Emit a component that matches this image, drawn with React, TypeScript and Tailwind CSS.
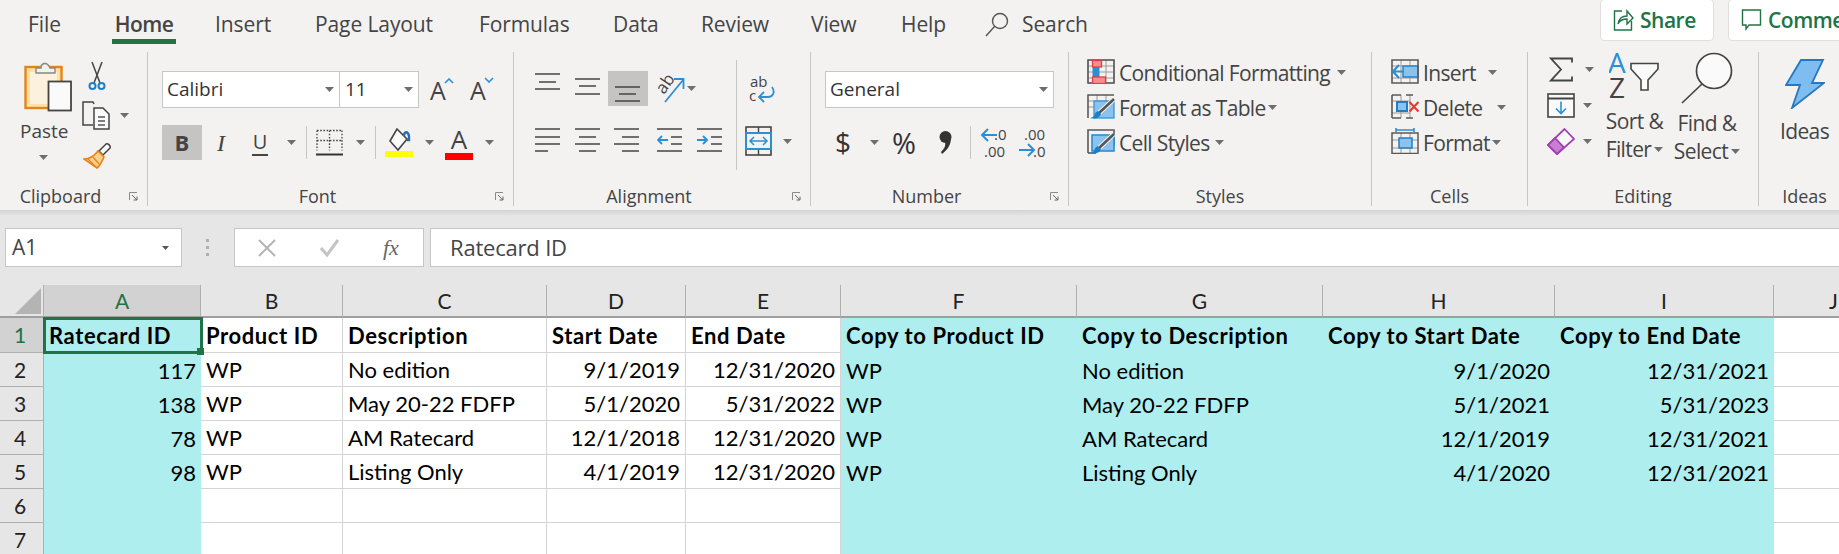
import React from "react";

const S = ({ w, h, className = "", children }: { w: number; h: number; className?: string; children?: React.ReactNode }) => (
  <svg width={w} height={h} viewBox={`0 0 ${w} ${h}`} fill="none" className={`block shrink-0 ${className}`}>
    {children}
  </svg>
);

const Caret = ({ className = "" }: { className?: string }) => (
  <S w={9} h={5} className={className}>
    <path d="M0 0h9L4.5 5z" fill="#6e6e6e" />
  </S>
);

const D = "#444444";
const BL = "#2b8fd6";
const G = "#5a5a5a";

const PasteIcon = ({ className = "" }: { className?: string }) => (
  <S w={48} h={52} className={className}>
    <rect x="1.5" y="7" width="36" height="41" fill="#fde2a6" stroke="#e5841b" strokeWidth="2.4" />
    <rect x="6" y="12" width="27" height="32" fill="#fbf1dc" />
    <path d="M12 13V8h5c0-5 6-7 9 0h5v5z" fill="#f3f2f1" stroke="#888" strokeWidth="1.4" />
    <rect x="24.5" y="21.5" width="22.5" height="29" fill="#fafafa" stroke="#444" strokeWidth="1.8" />
  </S>
);
const CutIcon = ({ className = "" }: { className?: string }) => (
  <S w={18} h={30} className={className}>
    <path d="M4 1l8 21M14 1L6 22" stroke="#444" strokeWidth="1.5" />
    <circle cx="4.5" cy="25" r="3" stroke="#1f7fc6" strokeWidth="2" />
    <circle cx="13.5" cy="25" r="3" stroke="#1f7fc6" strokeWidth="2" />
  </S>
);
const CopyIcon = () => (
  <S w={28} h={29}>
    <path d="M11 24H1V1h10l1 2" stroke="#444" strokeWidth="1.5" />
    <path d="M12 7h9l6 6v15H12z" fill="#fafafa" stroke="#444" strokeWidth="1.5" />
    <path d="M16 16h7M16 20h7M16 24h7" stroke="#555" strokeWidth="1.3" />
  </S>
);
const BrushIcon = ({ className = "" }: { className?: string }) => (
  <S w={28} h={27} className={className}>
    <path d="M16 9l4 4 7-7c1-2-2-5-4-4z" fill="#fafafa" stroke="#444" strokeWidth="1.5" />
    <path d="M1 17c6 0 11-4 14-8l6 6c-2 4-4 9-7 11z" fill="#fbd08c" stroke="#e5841b" strokeWidth="1.6" />
    <path d="M5 17l9 9M10 15l6 7" stroke="#e5841b" strokeWidth="1.2" />
  </S>
);
const BordersIcon = () => (
  <S w={27} h={28}>
    <path d="M1 1.5h25M1 1.5v20M26 1.5v20M13.5 1.5v20M1 11.5h25" stroke="#444" strokeWidth="1.3" strokeDasharray="1.6 1.6" />
    <path d="M0 25.5h27" stroke="#333" strokeWidth="2" />
  </S>
);
const FillIcon = () => (
  <S w={28} h={29}>
    <path d="M12 1l10 10-9 11L5 13z" fill="#fafafa" stroke="#444" strokeWidth="1.6" />
    <path d="M19 8c0-5 4-5 5 0v4h-2" stroke="#1f6fb8" strokeWidth="2.4" />
    <rect x="0" y="23" width="28" height="6.5" fill="#ffff00" />
  </S>
);
const Lines = ({ l }: { l: [number, number, number][] }) => (
  <S w={26} h={35}>
    {l.map(([a, b, y], i) => (
      <path key={i} d={`M${a} ${y}H${b}`} stroke={D} strokeWidth="1.5" />
    ))}
  </S>
);
const Arrow = ({ d }: { d: string }) => <path d={d} stroke={BL} strokeWidth="1.9" />;

const OrientIcon = () => (
  <S w={30} h={35}>
    <text x="0" y="0" transform="translate(9 24) rotate(-55)" fontSize="17" fill={D} fontFamily="Open Sans">ab</text>
    <path d="M10 31L28 9M19 8h9.5v10" stroke={BL} strokeWidth="1.8" />
  </S>
);
const WrapIcon = () => (
  <S w={28} h={30}>
    <text x="2" y="13" fontSize="15" fill={D} fontFamily="Open Sans">ab</text>
    <text x="1" y="27" fontSize="15" fill={D} fontFamily="Open Sans">c</text>
    <path d="M24 13c4 6 0 10-4 10h-8M16 18l-5 5 5 5" stroke={BL} strokeWidth="1.8" />
  </S>
);
const MergeIcon = () => (
  <S w={27} h={30}>
    <rect x="1" y="1" width="25" height="28" stroke="#444" strokeWidth="1.6" />
    <path d="M13.5 1v6M13.5 23v6" stroke="#444" strokeWidth="1.4" />
    <rect x="1" y="7" width="25" height="16" fill="#f3f2f1" stroke={BL} strokeWidth="2" />
    <path d="M5 15h17M9 11l-4 4 4 4M18 11l4 4-4 4" stroke={BL} strokeWidth="1.5" />
  </S>
);
const CommaIcon = () => (
  <S w={14} h={26}>
    <circle cx="7.5" cy="7" r="6" fill="#333" />
    <path d="M13 8c0 8-5 13-9 16l-1-2c3-3 5-6 4-10z" fill="#333" />
  </S>
);
const DecIcon = ({ inc }: { inc?: boolean }) => (
  <S w={28} h={34}>
    {inc ? (
      <>
        <text x="6" y="14" fontSize="15" fill={D} fontFamily="Open Sans">.00</text>
        <text x="15" y="31" fontSize="15" fill={D} fontFamily="Open Sans">.0</text>
        <path d="M1 24h15M10 18l6 6-6 6" stroke={BL} strokeWidth="2" />
      </>
    ) : (
      <>
        <text x="14" y="14" fontSize="15" fill={D} fontFamily="Open Sans">.0</text>
        <text x="4" y="31" fontSize="15" fill={D} fontFamily="Open Sans">.00</text>
        <path d="M17 9H2M8 3L2 9l6 6" stroke={BL} strokeWidth="2" />
      </>
    )}
  </S>
);
const GridLines = () => (
  <path d="M1 1h26v23H1zM10 1v23M19 1v23M1 7h26M1 13h26M1 19h26" stroke="#9a9a9a" strokeWidth="1" />
);
const Frame = () => <path d="M1 1h26v23H1z" stroke={G} strokeWidth="1.6" />;
const CondIcon = () => (
  <S w={28} h={25}>
    <GridLines />
    <Frame />
    <rect x="5.5" y="8" width="7" height="10" fill={BL} />
    <rect x="5.5" y="1.5" width="9" height="6.5" fill="#f58f8f" stroke="#e63c3c" strokeWidth="1.3" />
    <rect x="5.5" y="18" width="13" height="6.5" fill="#f58f8f" stroke="#e63c3c" strokeWidth="1.3" />
  </S>
);
const Brush = () => (
  <>
    <path d="M27 5L12 19" stroke="#f3f2f1" strokeWidth="4.5" />
    <path d="M27 5L12 19" stroke="#555" strokeWidth="2.6" />
    <path d="M11 17c-3 1-3 3-4 5-1 1-3 2-4 2 4 1 9 1 11-4z" fill="#1f7fc6" />
  </>
);
const TableIcon = () => (
  <S w={28} h={25}>
    <path d="M1 7h26M1 13h26M10 1v23M19 1v23" stroke="#9a9a9a" />
    <rect x="7" y="7" width="20" height="17" fill="#8cc3ee" stroke={BL} strokeWidth="1.2" />
    <path d="M1 24V1h26" stroke={G} strokeWidth="1.6" />
    <Brush />
  </S>
);
const CellStyleIcon = () => (
  <S w={28} h={25}>
    <path d="M1 24V1h26v16" stroke={G} strokeWidth="1.6" />
    <path d="M1 24h8" stroke={G} strokeWidth="1.6" />
    <rect x="5" y="6" width="22" height="16" fill="#8cc3ee" stroke={BL} strokeWidth="1.6" />
    <Brush />
  </S>
);
const InsertIcon = () => (
  <S w={28} h={25}>
    <path d="M10 1v23M19 1v23M1 7h26M1 19h26" stroke="#9a9a9a" />
    <rect x="12" y="7" width="15" height="11" fill="#8cc3ee" stroke="#1f7fc6" strokeWidth="1.4" />
    <Frame />
    <path d="M13 12.5H2M8 6l-6 6.5L8 19" stroke={BL} strokeWidth="2.2" />
  </S>
);
const DeleteIcon = () => (
  <S w={28} h={25}>
    <path d="M10 1v23M19 1v23M1 7h18M1 19h18" stroke="#9a9a9a" />
    <path d="M1 1h9M15 1h7M1 24h9M15 24h7M1 1v23" stroke={G} strokeWidth="1.6" />
    <rect x="6" y="8" width="10" height="9" fill="#8cc3ee" stroke="#1f7fc6" strokeWidth="2" />
    <path d="M18.5 8l9 9.5M27.5 8l-9 9.5" stroke="#e53935" strokeWidth="2.2" />
  </S>
);
const FormatIcon = () => (
  <S w={28} h={26}>
    <path d="M5 2h18M5 0v4M23 0v4" stroke={BL} strokeWidth="1.6" />
    <path d="M10 5v21M19 5v21M1 12h26M1 20h26" stroke="#9a9a9a" />
    <path d="M1 5h26v20.5H1z" stroke={G} strokeWidth="1.5" />
    <rect x="8" y="10" width="13" height="10" fill="#8cc3ee" stroke="#1f7fc6" strokeWidth="1.5" />
  </S>
);
const SigmaIcon = () => (
  <S w={24} h={25}>
    <path d="M23 5.5V1.5H2L12 12.5 2 23.5h21v-4" stroke="#444" strokeWidth="1.8" />
  </S>
);
const FillDown = () => (
  <S w={28} h={25}>
    <rect x="1" y="1" width="26" height="23" fill="#fafafa" stroke="#444" strokeWidth="1.6" />
    <path d="M1 5.5h26" stroke="#444" strokeWidth="2" />
    <path d="M14 8.5v12M9 15.5l5 5 5-5" stroke={BL} strokeWidth="1.6" />
  </S>
);
const ClearIcon = () => (
  <S w={28} h={27}>
    <path d="M17.5 1L27 11 10 26 1 17z" fill="#fafafa" stroke="#a03fb0" strokeWidth="1.8" />
    <path d="M8 10L17 19.5 10 26 1 17z" fill="#c77fd1" stroke="#a03fb0" strokeWidth="1.8" />
  </S>
);
const SortIcon = () => (
  <S w={51} h={47}>
    <text x="-1" y="21" fontSize="28" fill={BL} fontFamily="Open Sans">A</text>
    <text x="0" y="46" fontSize="28" fill={D} fontFamily="Open Sans">Z</text>
    <path d="M22 11.5h27V17L39 28v10h-7V28L22 17z" fill="#fafafa" stroke="#444" strokeWidth="1.6" />
  </S>
);
const FindIcon = () => (
  <S w={53} h={52}>
    <circle cx="33" cy="19" r="17.5" fill="#fafafa" stroke="#444" strokeWidth="1.7" />
    <path d="M21 32L1 51" stroke="#444" strokeWidth="1.7" />
  </S>
);
const BoltIcon = () => (
  <S w={40} h={50}>
    <path d="M16 1h22L27 24h12L7 49l8-23H1z" fill="#7fbdf0" stroke="#2478c2" strokeWidth="1.8" />
  </S>
);

const Group = ({
  w,
  label,
  launcher,
  children,
}: {
  w: string;
  label: string;
  launcher?: boolean;
  children: React.ReactNode;
}) => (
  <div className={`h-[154px] shrink-0 border-r border-[#c8c6c4] flex flex-col ${w}`}>
    <div className="h-[134px]">{children}</div>
    <div className="h-[20px] flex items-center">
      <div className="flex-1 text-center text-[18px] leading-[20px] text-[#444] whitespace-nowrap">{label}</div>
      {launcher && (
        <div className="w-[26px] flex justify-start pl-[8px]">
          <S w={9} h={9}>
            <path d="M.5 8V.5H8" stroke="#8a8a8a" />
            <path d="M3 3l5 5M8 4.5V8H4.5" stroke="#666" />
          </S>
        </div>
      )}
    </div>
  </div>
);

const StyleRow = ({ icon, text, w }: { icon: React.ReactNode; text: string; w: string }) => (
  <div className="h-[35px] flex items-center">
    <div className="mb-[3px]">{icon}</div>
    <div className={`ml-[4px] ${w} text-[21px] leading-[24px] tracking-[-0.65px] text-[#444] whitespace-nowrap`}>{text}</div>
    <Caret />
  </div>
);

type Cell = { t: string; r?: boolean };
const rows: Cell[][] = [
  [{ t: "Ratecard ID" }, { t: "Product ID" }, { t: "Description" }, { t: "Start Date" }, { t: "End Date" }, { t: "Copy to Product ID" }, { t: "Copy to Description" }, { t: "Copy to Start Date" }, { t: "Copy to End Date" }, { t: "" }],
  [{ t: "117", r: true }, { t: "WP" }, { t: "No edition" }, { t: "9/1/2019", r: true }, { t: "12/31/2020", r: true }, { t: "WP" }, { t: "No edition" }, { t: "9/1/2020", r: true }, { t: "12/31/2021", r: true }, { t: "" }],
  [{ t: "138", r: true }, { t: "WP" }, { t: "May 20-22 FDFP" }, { t: "5/1/2020", r: true }, { t: "5/31/2022", r: true }, { t: "WP" }, { t: "May 20-22 FDFP" }, { t: "5/1/2021", r: true }, { t: "5/31/2023", r: true }, { t: "" }],
  [{ t: "78", r: true }, { t: "WP" }, { t: "AM Ratecard" }, { t: "12/1/2018", r: true }, { t: "12/31/2020", r: true }, { t: "WP" }, { t: "AM Ratecard" }, { t: "12/1/2019", r: true }, { t: "12/31/2021", r: true }, { t: "" }],
  [{ t: "98", r: true }, { t: "WP" }, { t: "Listing Only" }, { t: "4/1/2019", r: true }, { t: "12/31/2020", r: true }, { t: "WP" }, { t: "Listing Only" }, { t: "4/1/2020", r: true }, { t: "12/31/2021", r: true }, { t: "" }],
  Array.from({ length: 10 }, () => ({ t: "" })),
  Array.from({ length: 10 }, () => ({ t: "" })),
];
const teal = [0, 5, 6, 7, 8];
const cols = ["A", "B", "C", "D", "E", "F", "G", "H", "I", "J"];

export default function App() {
  return (
    <div className="w-[1839px] h-[554px] overflow-hidden bg-[#e6e6e6] font-['Open_Sans',sans-serif]">
      {/* Ribbon */}
      <div className="h-[210px] bg-[#f3f2f1] overflow-hidden">
        <div className="h-[52px] flex *:shrink-0 text-[21px] leading-[26px] tracking-[-0.1px] text-[#444] whitespace-nowrap">
          <div className="ml-[28px] w-[34px] mt-[11px]">File</div>
          <div className="ml-[50px] w-[64px] h-[44px] pt-[11px] border-b-[5px] border-[#217346] font-semibold text-center tracking-[-0.5px]">Home</div>
          <div className="ml-[39px] w-[57px] mt-[11px]">Insert</div>
          <div className="ml-[43px] w-[123px] mt-[11px]">Page Layout</div>
          <div className="ml-[41px] w-[93px] mt-[11px]">Formulas</div>
          <div className="ml-[41px] w-[47px] mt-[11px]">Data</div>
          <div className="ml-[41px] w-[70px] mt-[11px]">Review</div>
          <div className="ml-[40px] w-[48px] mt-[11px]">View</div>
          <div className="ml-[42px] w-[46px] mt-[11px]">Help</div>
          <S w={24} h={26} className="ml-[38px] mt-[12px]">
            <circle cx="15" cy="9" r="7.5" stroke="#555" strokeWidth="1.4" />
            <path d="M9.5 14.5L1 24" stroke="#555" strokeWidth="1.4" />
          </S>
          <div className="ml-[13px] w-[66px] mt-[11px]">Search</div>
          <div className="ml-[512px] w-[114px] h-[42px] -mt-px bg-white border border-[#e1dfdd] rounded-[4px] flex items-center pl-[12px] text-[#217346] font-semibold">
            <S w={21} h={24}>
              <path d="M9 3H1.5v19h17v-9" stroke="#217346" strokeWidth="1.4" />
              <path d="M5 16c1-6 5-8 9-8V3l6 7-6 6v-5c-4 0-7 1-9 5z" stroke="#217346" strokeWidth="1.4" />
            </S>
            <span className="ml-[6px] tracking-[-0.5px]">Share</span>
          </div>
          <div className="ml-[14px] w-[160px] h-[42px] -mt-px bg-white border border-[#e1dfdd] rounded-[4px] flex items-center pl-[12px] text-[#217346] font-semibold">
            <S w={21} h={24}>
              <path d="M1.5 2h18v15H8l-3 4v-4H1.5z" stroke="#217346" strokeWidth="1.4" />
            </S>
            <span className="ml-[6px] tracking-[-0.5px]">Comments</span>
          </div>
        </div>

        <div className="flex">
          {/* Clipboard */}
          <Group w="w-[148px]" label="Clipboard" launcher>
            <div className="flex">
              <div className="ml-[20px] w-[47px] flex flex-col">
                <PasteIcon className="mt-[8px] ml-[4px]" />
                <div className="mt-[7px] text-[19px] leading-[24px] text-[#444]">Paste</div>
                <Caret className="mt-[12px] self-center" />
              </div>
              <div className="ml-[15px] flex flex-col">
                <CutIcon className="mt-[9px] ml-[6px]" />
                <div className="mt-[10px] flex items-center">
                  <CopyIcon />
                  <Caret className="ml-[10px]" />
                </div>
                <BrushIcon className="mt-[12px] ml-[1px]" />
              </div>
            </div>
          </Group>

          {/* Font */}
          <Group w="w-[366px]" label="Font" launcher>
            <div className="flex flex-col">
              <div className="mt-[19px] ml-[14px] flex items-center h-[37px]">
                <div className="w-[178px] h-[37px] bg-white border border-[#c6c6c6] flex items-center justify-between pl-[4px] pr-[5px] text-[19px] text-[#333]">
                  <span>Calibri</span>
                  <Caret />
                </div>
                <div className="w-[80px] h-[37px] -ml-px bg-white border border-[#c6c6c6] flex items-center justify-between pl-[5px] pr-[5px] text-[19px] text-[#333]">
                  <span>11</span>
                  <Caret />
                </div>
                <div className="ml-[11px] w-[24px] h-[30px] relative text-[25px] leading-[30px] text-[#444]">
                  A
                  <S w={10} h={6} className="absolute top-[3px] left-[14px]">
                    <path d="M1 5l4-4 4 4" stroke={BL} strokeWidth="1.6" />
                  </S>
                </div>
                <div className="ml-[16px] w-[24px] h-[30px] relative text-[25px] leading-[30px] text-[#444]">
                  A
                  <S w={10} h={6} className="absolute top-[2px] left-[14px]">
                    <path d="M1 1l4 4 4-4" stroke={BL} strokeWidth="1.6" />
                  </S>
                </div>
              </div>
              <div className="mt-[17px] ml-[14px] flex items-center h-[35px] text-[#444]">
                <div className="w-[40px] h-[35px] bg-[#c5c4c3] flex items-center justify-center font-bold text-[22px]">B</div>
                <div className="w-[38px] text-center italic text-[24px] font-['Liberation_Serif',serif]">I</div>
                <div className="w-[40px] flex flex-col items-center">
                  <span className="text-[20px] leading-[24px]">U</span>
                  <span className="w-[16px] h-[2px] bg-[#444]" />
                </div>
                <Caret className="ml-[7px]" />
                <div className="ml-[10px] w-px h-[33px] bg-[#c8c6c4]" />
                <div className="ml-[9px]"><BordersIcon /></div>
                <Caret className="ml-[13px]" />
                <div className="ml-[10px] w-px h-[33px] bg-[#c8c6c4]" />
                <div className="ml-[9px]"><FillIcon /></div>
                <Caret className="ml-[12px]" />
                <div className="ml-[11px] w-[28px] h-[35px] flex flex-col items-center">
                  <span className="text-[26px] leading-[28px] h-[28px]">A</span>
                  <span className="w-[28px] h-[7px] bg-[#ff0000]" />
                </div>
                <Caret className="ml-[12px]" />
              </div>
            </div>
          </Group>

          {/* Alignment */}
          <Group w="w-[297px]" label="Alignment" launcher>
            <div className="flex">
              <div className="w-[222px] flex flex-col">
                <div className="mt-[19px] ml-[21px] h-[35px] flex items-center">
                  <Lines l={[[0, 25, 3], [4, 21, 11], [0, 25, 18]]} />
                  <div className="ml-[14px]"><Lines l={[[0, 25, 8], [4, 21, 15], [0, 25, 23]]} /></div>
                  <div className="ml-[7px] w-[40px] h-[35px] bg-[#c5c4c3] flex justify-center"><Lines l={[[0, 25, 16], [4, 21, 23], [0, 25, 30]]} /></div>
                  <div className="ml-[7px]"><OrientIcon /></div>
                  <Caret className="ml-[2px]" />
                </div>
                <div className="mt-[16px] ml-[21px] h-[35px] flex items-center">
                  <Lines l={[[0, 25, 7], [0, 25, 15], [0, 25, 22], [0, 13, 29]]} />
                  <div className="ml-[14px]"><Lines l={[[0, 25, 7], [4, 21, 15], [0, 25, 22], [4, 21, 29]]} /></div>
                  <div className="ml-[13px]"><Lines l={[[0, 25, 7], [8, 25, 15], [0, 25, 22], [8, 25, 29]]} /></div>
                  <div className="ml-[17px]">
                    <S w={26} h={35}>
                      <path d="M0 7h25M14 15h11M14 22h11M0 29h25" stroke={D} strokeWidth="1.5" />
                      <Arrow d="M11 18H1M5 14l-4 4 4 4" />
                    </S>
                  </div>
                  <div className="ml-[14px]">
                    <S w={26} h={35}>
                      <path d="M0 7h25M14 15h11M14 22h11M0 29h25" stroke={D} strokeWidth="1.5" />
                      <Arrow d="M0 18h10M6 14l4 4-4 4" />
                    </S>
                  </div>
                </div>
              </div>
              <div className="mt-[8px] w-px h-[110px] bg-[#c8c6c4]" />
              <div className="flex flex-col">
                <div className="ml-[11px] mt-[22px]"><WrapIcon /></div>
                <div className="ml-[8px] mt-[22px] flex items-center">
                  <MergeIcon />
                  <Caret className="ml-[11px]" />
                </div>
              </div>
            </div>
          </Group>

          {/* Number */}
          <Group w="w-[258px]" label="Number" launcher>
            <div className="flex flex-col">
              <div className="mt-[19px] ml-[14px] w-[229px] h-[37px] bg-white border border-[#c6c6c6] flex items-center justify-between pl-[4px] pr-[5px] text-[19px] text-[#333]">
                <span>General</span>
                <Caret />
              </div>
              <div className="mt-[17px] ml-[19px] h-[35px] flex items-center text-[#333]">
                <div className="w-[26px] text-center text-[28px] leading-[35px]">$</div>
                <Caret className="ml-[14px]" />
                <div className="ml-[11px] w-[28px] text-center text-[29px] leading-[35px]">%</div>
                <div className="ml-[20px] w-[14px]"><CommaIcon /></div>
                <div className="ml-[18px] w-px h-[33px] bg-[#c8c6c4]" />
                <div className="ml-[9px]"><DecIcon /></div>
                <div className="ml-[10px]"><DecIcon inc /></div>
              </div>
            </div>
          </Group>

          {/* Styles */}
          <Group w="w-[303px]" label="Styles">
            <div className="pt-[3px] pl-[18px] flex flex-col">
              <StyleRow icon={<CondIcon />} text="Conditional Formatting" w="w-[218px]" />
              <StyleRow icon={<TableIcon />} text="Format as Table" w="w-[149px]" />
              <StyleRow icon={<CellStyleIcon />} text="Cell Styles" w="w-[96px]" />
            </div>
          </Group>

          {/* Cells */}
          <Group w="w-[156px]" label="Cells">
            <div className="pt-[3px] pl-[19px] flex flex-col">
              <StyleRow icon={<InsertIcon />} text="Insert" w="w-[65px]" />
              <StyleRow icon={<DeleteIcon />} text="Delete" w="w-[74px]" />
              <StyleRow icon={<FormatIcon />} text="Format" w="w-[69px]" />
            </div>
          </Group>

          {/* Editing */}
          <Group w="w-[231px]" label="Editing">
            <div className="flex">
              <div className="ml-[19px] w-[53px] flex flex-col">
                <div className="mt-[5px] ml-[2px] flex items-center">
                  <SigmaIcon />
                  <Caret className="ml-[12px]" />
                </div>
                <div className="mt-[11px] flex items-center">
                  <FillDown />
                  <Caret className="ml-[8px]" />
                </div>
                <div className="mt-[10px] flex items-center">
                  <ClearIcon />
                  <Caret className="ml-[8px]" />
                </div>
              </div>
              <div className="w-[69px] flex flex-col items-center text-[21px] leading-[28px] tracking-[-0.6px] text-[#444]">
                <SortIcon className="mt-[9px]" />
                <div className="mt-[8px] whitespace-nowrap">Sort &amp;</div>
                <div className="flex items-center whitespace-nowrap">Filter<Caret className="ml-[3px]" /></div>
              </div>
              <div className="w-[76px] flex flex-col items-center text-[21px] leading-[28px] tracking-[-0.6px] text-[#444]">
                <FindIcon className="mt-[7px]" />
                <div className="mt-[5px] whitespace-nowrap">Find &amp;</div>
                <div className="flex items-center whitespace-nowrap">Select<Caret className="ml-[3px]" /></div>
              </div>
            </div>
          </Group>

          {/* Ideas */}
          <Group w="w-[92px]" label="Ideas">
            <div className="flex flex-col items-center pt-[7px]">
              <BoltIcon />
              <div className="mt-[8px] text-[21px] leading-[28px] tracking-[-0.6px] text-[#444]">Ideas</div>
            </div>
          </Group>
        </div>
      </div>

      {/* Ribbon shadow */}
      <div className="h-[6px] bg-gradient-to-b from-[#d4d4d4] to-[#e6e6e6]" />

      {/* Formula bar */}
      <div className="mt-[12px] h-[39px] flex *:shrink-0 text-[#444]">
        <div className="ml-[5px] w-[177px] bg-white border border-[#c6c6c6] flex items-center justify-between pl-[6px] pr-[12px] text-[21px]">
          <span>A1</span>
          <S w={7} h={4}><path d="M0 0h7L3.5 4z" fill="#555" /></S>
        </div>
        <div className="ml-[24px] w-[3px] flex flex-col justify-center gap-[4px]">
          <span className="h-[3px] bg-[#b0b0b0]" />
          <span className="h-[3px] bg-[#b0b0b0]" />
          <span className="h-[3px] bg-[#b0b0b0]" />
        </div>
        <div className="ml-[25px] w-[190px] bg-white border border-[#c6c6c6] flex items-center">
          <S w={18} h={18} className="ml-[23px]"><path d="M1 1l16 16M17 1L1 17" stroke="#b4b4b4" strokeWidth="2" /></S>
          <S w={19} h={18} className="ml-[44px]"><path d="M1 9l6 7L18 1" stroke="#c4c4c4" strokeWidth="3" /></S>
          <span className="ml-[44px] font-['Liberation_Serif',serif] italic text-[22px] text-[#666]">fx</span>
        </div>
        <div className="ml-[6px] w-[1420px] bg-white border border-[#c6c6c6] flex items-center pl-[19px] text-[22px] tracking-[-0.2px]">Ratecard ID</div>
      </div>

      {/* Sheet */}
      <div className="mt-[18px] grid grid-cols-[44px_157px_142px_204px_139px_155px_236px_246px_232px_219px_120px] font-['Lato',sans-serif] text-[22px] text-black">
        <div className="h-[33px] border-r border-b-2 border-r-[#b0b0b0] border-b-[#9f9f9f] bg-[#e6e6e6] flex items-end justify-end pr-[2px] pb-[2px]">
          <S w={26} h={26}><path d="M26 0v26H0z" fill="#b4b4b4" /></S>
        </div>
        {cols.map((c, i) => (
          <div
            key={c}
            className={
              i === 0
                ? "h-[33px] border-r border-b-2 border-r-[#b0b0b0] border-b-[#9f9f9f] bg-[#d2d2d2] text-[#217346] flex items-center justify-center text-[21px]"
                : "h-[33px] border-r border-b-2 border-r-[#b0b0b0] border-b-[#9f9f9f] bg-[#e6e6e6] text-[#222] flex items-center justify-center text-[21px]"
            }
          >
            {c}
          </div>
        ))}
        {rows.map((row, ri) => (
          <React.Fragment key={ri}>
            <div
              className={
                ri === 0
                  ? "h-[35px] w-[44px] border-r border-b border-[#b0b0b0] bg-[#d2d2d2] text-[#217346] flex items-center justify-center pr-[3px] text-[21px]"
                  : "h-[34px] w-[44px] border-r border-b border-[#b0b0b0] bg-[#e6e6e6] text-[#222] flex items-center justify-center pr-[3px] text-[21px]"
              }
            >
              {ri + 1}
            </div>
            {row.map((c, ci) => {
              const isTeal = teal.includes(ci);
              return (
                <div
                  key={ci}
                  className={[
                    "relative flex items-center px-[5px] whitespace-nowrap",
                    ri === 0 ? "h-[35px] font-bold tracking-[0.6px]" : "h-[34px]",
                    c.r ? "justify-end" : "justify-start",
                    isTeal ? "bg-[#afeeee]" : "bg-white border-r border-b border-[#d4d4d4]",
                  ].join(" ")}
                >
                  {c.t}
                  {ri === 0 && ci === 0 && (
                    <>
                      <div className="absolute -left-px -top-px -right-[2px] -bottom-[1px] border-[3px] border-[#217346] z-10" />
                      <div className="absolute -right-[3px] -bottom-[2px] w-[7px] h-[7px] bg-[#217346] z-20" />
                    </>
                  )}
                </div>
              );
            })}
          </React.Fragment>
        ))}
      </div>
    </div>
  );
}
